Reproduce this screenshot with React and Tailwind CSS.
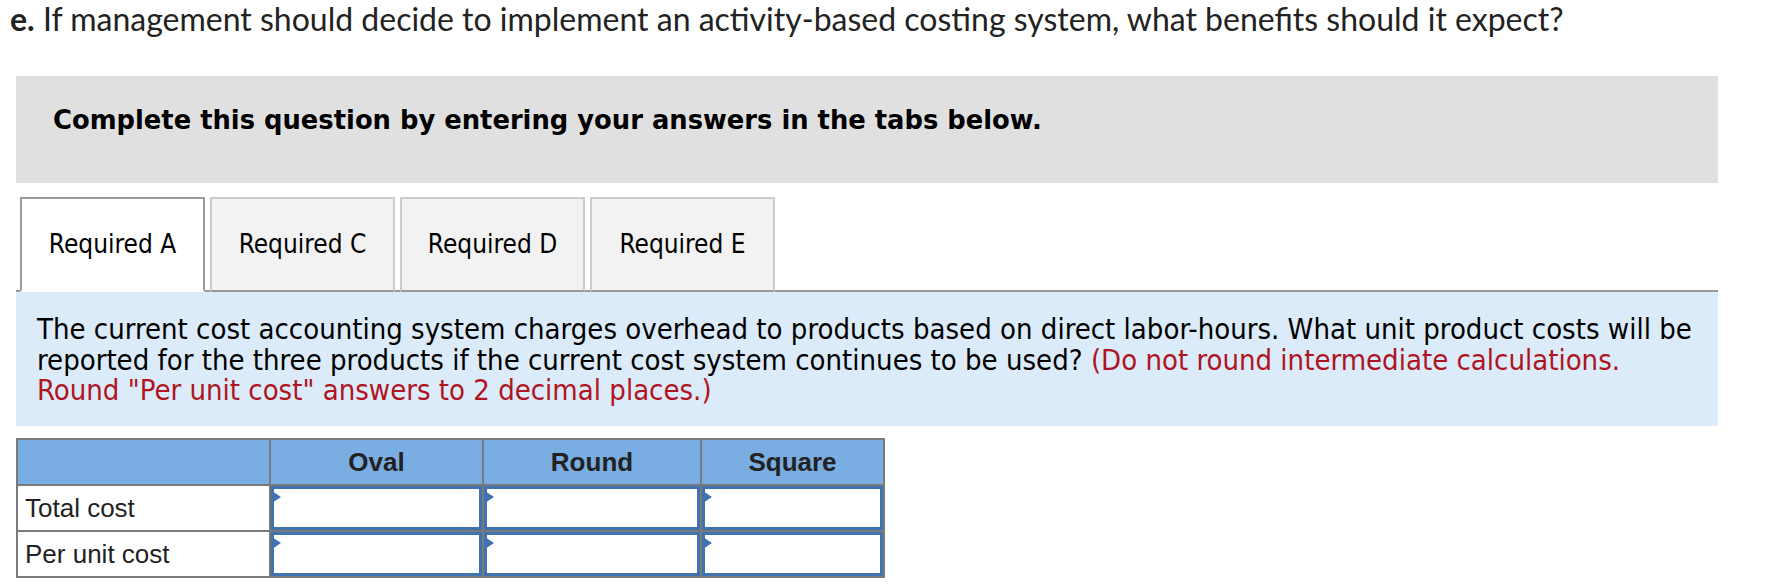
import React from "react";

const tabs = ["Required A", "Required C", "Required D", "Required E"];
const columns = [
  { name: "Oval", w: "w-[213px]" },
  { name: "Round", w: "w-[218px]" },
  { name: "Square", w: "w-[183px]" },
];
const rows = ["Total cost", "Per unit cost"];

const InputCell = () => (
  <td className="border-2 border-[#7a7a7a] p-0 h-[46px]">
    <div className="relative h-full border-[3px] border-[#3f74b1] bg-white">
      <svg
        className="absolute left-[-2px] top-[2px]"
        width="9"
        height="12"
        viewBox="0 0 9 12"
      >
        <polygon points="0,0 9,6 0,12" fill="#3f74b1" />
      </svg>
    </div>
  </td>
);

export default function App() {
  return (
    <div className="w-[1776px] h-[586px] bg-white overflow-hidden">
      <h1 className="pl-[10px] pt-[3px] text-[32px] leading-[32px] text-[#222] font-['Lato',sans-serif]">
        <span className="font-bold">e.</span> If management should decide to implement an activity-based costing system, what benefits should it expect?
      </h1>

      <div className="ml-4 mt-[41px] w-[1702px] h-[107px] bg-[#e0e0e0] pl-[37px] pt-[29px]">
        <p className="text-[25.8px] leading-[30px] font-bold text-black font-['DejaVu_Sans',sans-serif]">
          Complete this question by entering your answers in the tabs below.
        </p>
      </div>

      <div className="ml-4 mt-[14px] w-[1702px]">
        <div className="flex items-end gap-[5px] pl-[4px] border-b-2 border-[#999]">
          {tabs.map((t, i) => (
            <div
              key={t}
              className={`w-[185px] h-[95px] mb-[-2px] flex items-center justify-center text-[26px] text-black font-['DejaVu_Sans_Condensed','DejaVu_Sans',sans-serif] border-2 ${
                i === 0
                  ? "bg-white border-[#999] border-b-white"
                  : "bg-[#f2f2f2] border-[#ccc] border-b-[#999]"
              }`}
            >
              {t}
            </div>
          ))}
        </div>

        <div className="bg-[#dbebf9] h-[134px] pl-[21px] pr-2 pt-[22px] text-[29px] leading-[30.5px] text-black whitespace-nowrap font-['DejaVu_Sans_Condensed','DejaVu_Sans',sans-serif]">
          The current cost accounting system charges overhead to products based on direct labor-hours. What unit product costs will be
          <br />
          reported for the three products if the current cost system continues to be used?{" "}
          <span className="text-[#b0141f]">
            (Do not round intermediate calculations.
            <br />
            Round "Per unit cost" answers to 2 decimal places.)
          </span>
        </div>

        <table className="mt-[12px] border-collapse border-2 border-[#7a7a7a] font-['Liberation_Sans',Arial,sans-serif]">
          <thead>
            <tr className="bg-[#7aade1] h-[46px]">
              <th className="w-[253px] border-2 border-[#7a7a7a]"></th>
              {columns.map((c) => (
                <th
                  key={c.name}
                  className={`${c.w} border-2 border-[#7a7a7a] text-[26px] font-bold text-[#222]`}
                >
                  {c.name}
                </th>
              ))}
            </tr>
          </thead>
          <tbody>
            {rows.map((r) => (
              <tr key={r}>
                <td className="border-2 border-[#7a7a7a] h-[46px] pl-[7px] text-[26px] text-[#222]">
                  {r}
                </td>
                {columns.map((c) => (
                  <InputCell key={c.name} />
                ))}
              </tr>
            ))}
          </tbody>
        </table>
      </div>
    </div>
  );
}
